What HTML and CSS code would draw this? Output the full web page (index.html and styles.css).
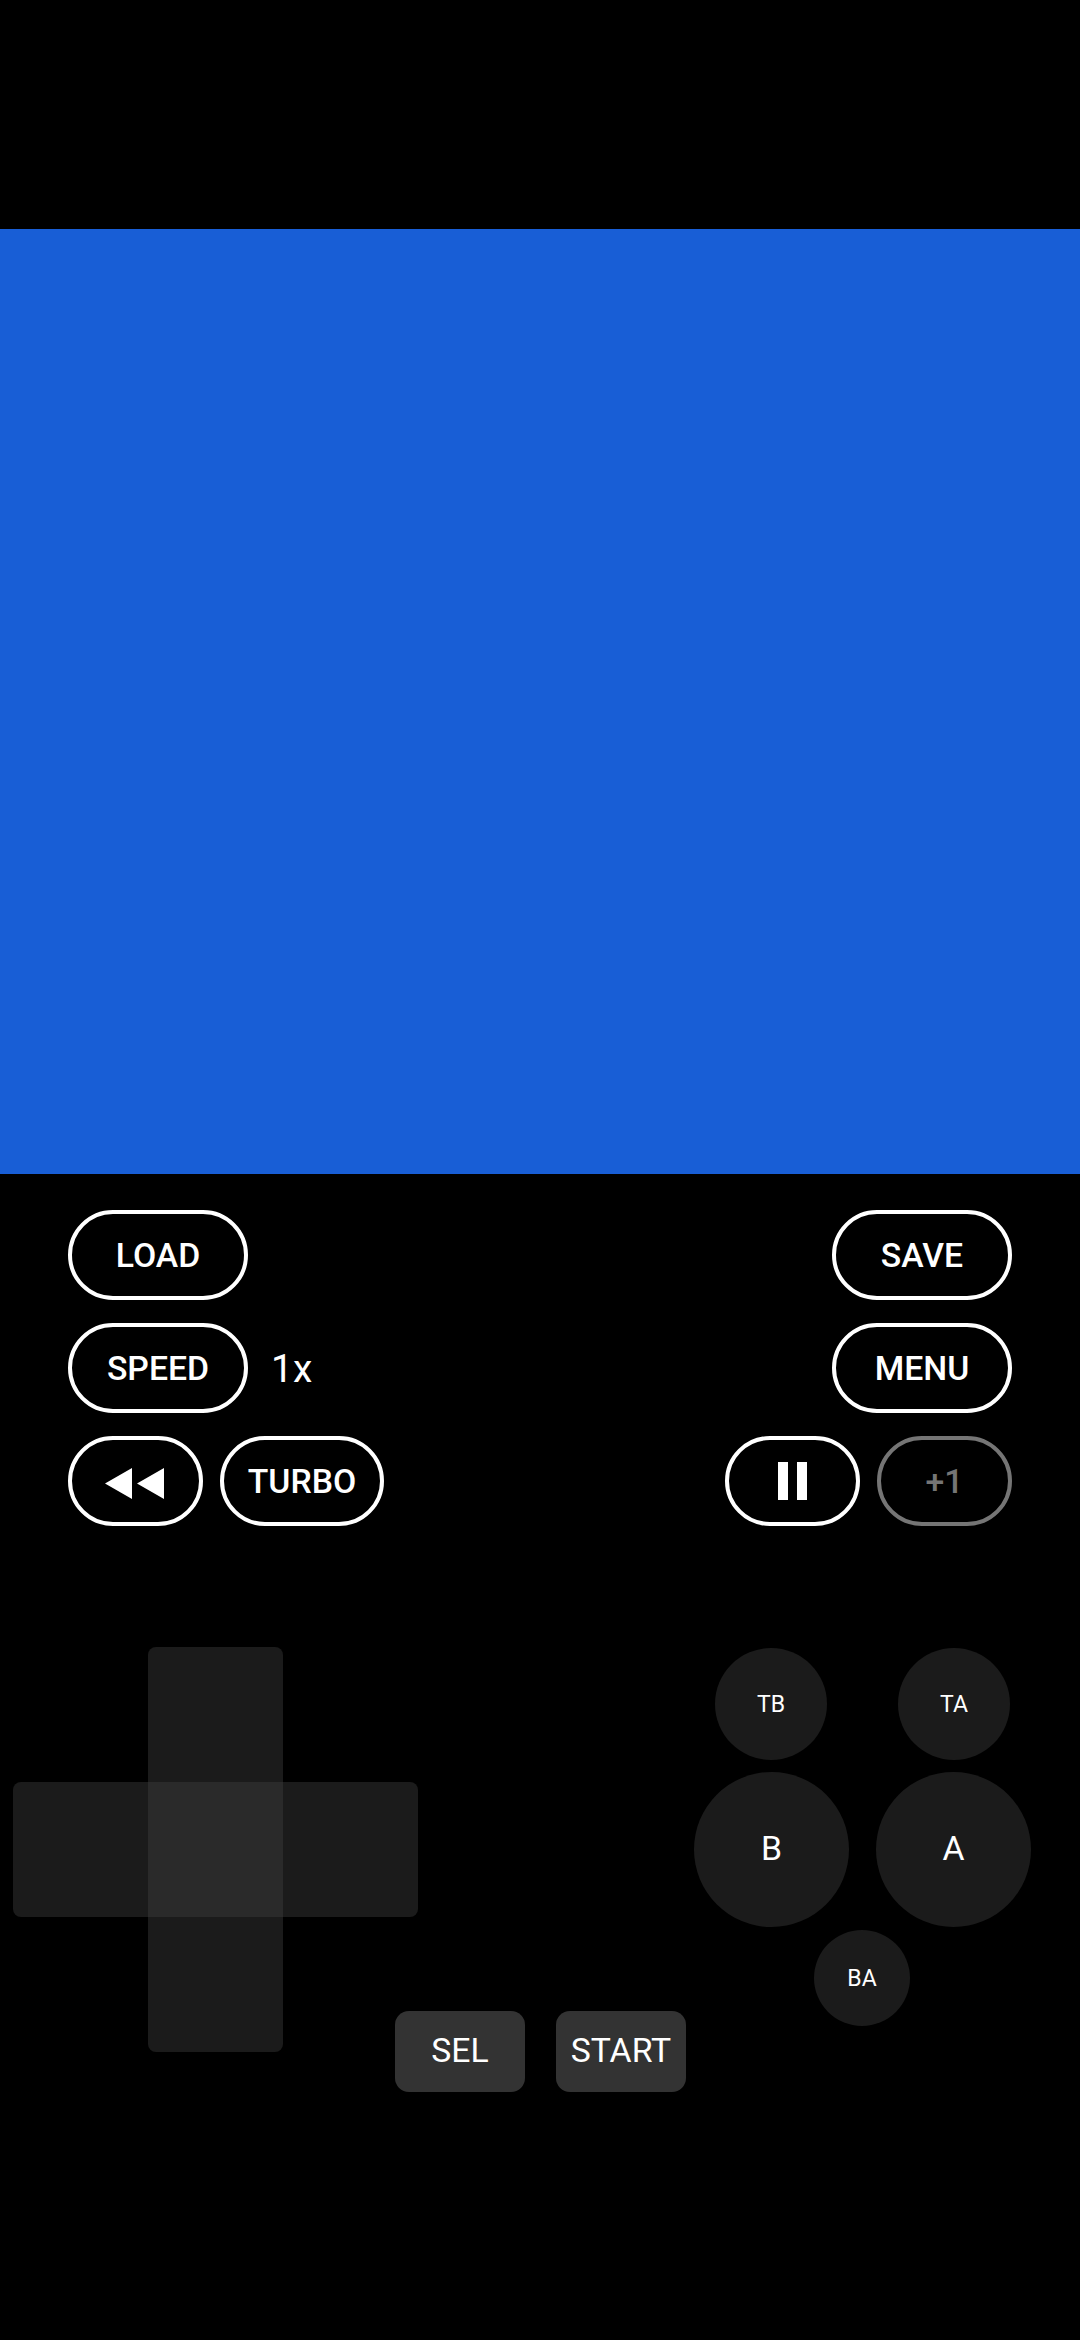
FILE: index.html
```html
<!DOCTYPE html>
<html lang="en">
<head>
    <meta charset="UTF-8">
    <meta name="viewport" content="width=device-width, initial-scale=1.0">
    <title>Emulator</title>
    <link rel="stylesheet" href="styles.css">
</head>
<body>
    <div class="top-gap"></div>
    <div class="screen"></div>

    <div class="controls">
        <div class="control-row">
            <button class="pill">LOAD</button>
            <button class="pill push-right">SAVE</button>
        </div>
        <div class="control-row">
            <button class="pill">SPEED</button>
            <span class="speed-value">1x</span>
            <button class="pill push-right">MENU</button>
        </div>
        <div class="control-row">
            <button class="pill small">
                <svg class="rewind-icon" width="59" height="31" viewBox="0 0 59 31"><path d="M0 15.5 27 0V31ZM32 15.5 59 0V31Z" fill="#fff"/></svg>
            </button>
            <button class="pill turbo">TURBO</button>
            <button class="pill small push-right">
                <svg width="29" height="38" viewBox="0 0 29 38"><path d="M0 0H10V38H0ZM19 0H29V38H19Z" fill="#fff"/></svg>
            </button>
            <button class="pill small disabled">+1</button>
        </div>
    </div>

    <div class="gamepad">
        <div class="dpad">
            <div class="dpad-bar dpad-v"></div>
            <div class="dpad-bar dpad-h"></div>
            <div class="dpad-center"></div>
        </div>
        <div class="round big btn-b">B</div>
        <div class="round big btn-a">A</div>
        <div class="round mid btn-tb">TB</div>
        <div class="round mid btn-ta">TA</div>
        <div class="round tiny btn-ba">BA</div>
        <div class="meta-row">
            <div class="meta">SEL</div>
            <div class="meta">START</div>
        </div>
    </div>
</body>
</html>
```

FILE: styles.css
```css
* {
    box-sizing: border-box;
}
body {
    font-family: Roboto, sans-serif;
    background-color: black;
    color: white;
    margin: 0;
    width: 1080px;
    height: 2340px;
    overflow: hidden;
    display: flex;
    flex-direction: column;
}
.top-gap {
    height: 229px;
}
.screen {
    height: 945px;
    background-color: #185ed6;
}
.controls {
    display: flex;
    flex-direction: column;
    gap: 23px;
    padding: 36px 68px 0;
}
.control-row {
    display: flex;
    align-items: center;
    gap: 17px;
}
.pill {
    width: 180px;
    height: 90px;
    padding: 0;
    display: flex;
    align-items: center;
    justify-content: center;
    background: transparent;
    color: white;
    border: 4px solid white;
    border-radius: 45px;
    font-family: Roboto, sans-serif;
    font-size: 33.75px;
    font-weight: 500;
}
.pill.small {
    width: 135px;
}
.pill.turbo {
    width: 164px;
}
.pill.disabled {
    color: #757575;
    border-color: #757575;
}
.rewind-icon {
    margin: 5px 3px 0 0;
}
.push-right {
    margin-left: auto;
}
.speed-value {
    margin-left: 6px;
    padding-top: 2px;
    font-size: 39px;
}
.gamepad {
    position: relative;
    flex: 1;
}
.dpad {
    position: absolute;
    left: 13px;
    top: 121px;
    width: 405px;
    height: 405px;
}
.dpad-bar {
    position: absolute;
    background-color: #1b1b1b;
    border-radius: 8px;
}
.dpad-v {
    left: 135px;
    top: 0;
    width: 135px;
    height: 405px;
}
.dpad-h {
    left: 0;
    top: 135px;
    width: 405px;
    height: 135px;
}
.dpad-center {
    position: absolute;
    left: 135px;
    top: 135px;
    width: 135px;
    height: 135px;
    background-color: #2a2a2a;
}
.round {
    position: absolute;
    display: flex;
    align-items: center;
    justify-content: center;
    background-color: #1b1b1b;
    border-radius: 50%;
}
.big {
    width: 155px;
    height: 155px;
    top: 246px;
    padding-bottom: 2px;
    font-size: 33.75px;
}
.mid {
    width: 112px;
    height: 112px;
    top: 122px;
    font-size: 23px;
}
.tiny {
    width: 96px;
    height: 96px;
    top: 404px;
    font-size: 23px;
}
.btn-b {
    left: 694px;
}
.btn-a {
    left: 876px;
}
.btn-tb {
    left: 715px;
}
.btn-ta {
    left: 898px;
}
.btn-ba {
    left: 814px;
}
.meta-row {
    position: absolute;
    left: 395px;
    top: 485px;
    display: flex;
    gap: 31px;
}
.meta {
    width: 130px;
    height: 81px;
    display: flex;
    align-items: center;
    justify-content: center;
    padding-bottom: 2px;
    background-color: #333;
    border-radius: 14px;
    font-size: 33.75px;
}
```
